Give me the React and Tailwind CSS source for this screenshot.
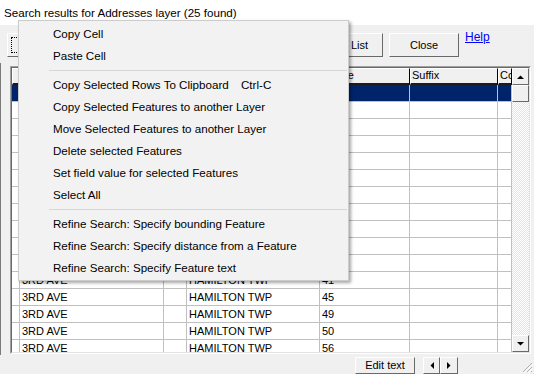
import React from "react";

const colW = ["w-[8px]", "w-[144px]", "w-[23px]", "w-[133px]", "w-[90px]", "w-[88px]", "w-[14px]"];
const headers = ["", "Street", "", "Municipality", "House", "Suffix", "Co"];
const nums = ["1", "5", "7", "9", "13", "17", "21", "25", "29", "33", "37", "41", "45", "49", "50", "56"];

function Tri({ dir }) {
  const pts = {
    up: "0,4 7,4 3.5,0.5",
    down: "0,0 7,0 3.5,3.5",
    left: "4,0 4,7 0.5,3.5",
    right: "0,0 0,7 3.5,3.5",
  }[dir];
  const vertical = dir === "up" || dir === "down";
  return (
    <svg width={vertical ? 7 : 4} height={vertical ? 4 : 7} viewBox={vertical ? "0 0 7 4" : "0 0 4 7"}>
      <polygon points={pts} fill="#000" />
    </svg>
  );
}

function SbBtn({ children }) {
  return (
    <div className="h-[17px] shrink-0 bg-[#f0f0f0] border border-t-white border-l-white border-r-[#696969] border-b-[#696969] flex items-center justify-center">
      {children}
    </div>
  );
}

function MenuItem({ children, shortcut }) {
  return (
    <div className="h-[22px] flex items-center pl-[34px] whitespace-nowrap text-black">
      {shortcut ? (
        <>
          <span className="inline-block w-[188px]">{children}</span>
          <span>{shortcut}</span>
        </>
      ) : (
        children
      )}
    </div>
  );
}

function Sep() {
  return (
    <div className="h-[7px] flex items-center pl-[30px] pr-[1px]">
      <div className="h-px flex-1 bg-[#d7d7d7]" />
    </div>
  );
}

export default function App() {
  return (
    <div className="w-[534px] h-[374px] relative overflow-hidden bg-[#f0f0f0] font-['Liberation_Sans',Arial,sans-serif] text-black">
      {/* title */}
      <div className="h-[25px] bg-white flex items-center pl-[4px] text-[11.6px] whitespace-nowrap">
        Search results for Addresses layer (25 found)
      </div>

      {/* toolbar */}
      <div className="h-[41px] flex items-start pt-[8px] text-[11px]">
        <div className="ml-[7px] w-[88px] h-[24px] bg-[#f0f0f0] border border-t-white border-l-white border-r-[#696969] border-b-[#696969] p-[3px]">
          <div className="w-full h-full border border-dotted border-black flex items-center justify-center">Zoom To</div>
        </div>
        <div className="ml-[202px] w-[86px] h-[24px] bg-[#f0f0f0] border border-t-white border-l-white border-r-[#696969] border-b-[#696969] flex items-center justify-end pr-[14px]">
          Print List
        </div>
        <div className="ml-[6px] w-[70px] h-[24px] bg-[#f0f0f0] border border-t-white border-l-white border-r-[#696969] border-b-[#696969] flex items-center justify-center">
          Close
        </div>
        <div className="ml-[6px] mt-[-3px] text-[12px] text-[#0000ff] underline leading-[14px]">Help</div>
      </div>

      {/* grid row */}
      <div className="flex h-[288px]">
        <div className="w-px bg-[#7a7a7a] mt-[-3px] h-[292px]" />
        <div className="ml-[9px] w-[521px] h-[288px] border border-t-[#a0a0a0] border-l-[#a0a0a0] border-r-white border-b-white">
          <div className="h-full border border-t-[#696969] border-l-[#696969] border-r-[#e3e3e3] border-b-[#e3e3e3] flex bg-white">
            <div className="w-[500px] flex flex-col overflow-hidden text-[11px]">
              <div className="h-[17px] shrink-0 flex">
                {headers.map((h, i) => (
                  <div
                    key={i}
                    className={`${colW[i]} h-full shrink-0 bg-[#f0f0f0] border-t border-l border-t-white border-l-white border-r border-r-black border-b-2 border-b-[#1c1c1c] pl-[1px] leading-[13px] overflow-hidden whitespace-nowrap`}
                  >
                    {h}
                  </div>
                ))}
              </div>
              {nums.map((n, r) => {
                const vals = ["", "3RD AVE", "", "HAMILTON TWP", n, "", ""];
                const sel = r === 0;
                return (
                  <div key={r} className={`h-[17px] shrink-0 flex ${sel ? "bg-[#00246a] text-white" : "bg-white"}`}>
                    {vals.map((v, i) => (
                      <div
                        key={i}
                        className={`${colW[i]} h-full shrink-0 border-r border-b border-[#c0c0c0] pl-[2px] leading-[16px] overflow-hidden whitespace-nowrap`}
                      >
                        {v}
                      </div>
                    ))}
                  </div>
                );
              })}
            </div>
            <div className="w-[17px] flex flex-col">
              <SbBtn>
                <Tri dir="up" />
              </SbBtn>
              <SbBtn />
              <div className="flex-1 bg-[image:repeating-conic-gradient(#e4e4e4_0%_25%,#ffffff_0%_50%)] bg-[length:2px_2px]" />
              <SbBtn>
                <Tri dir="down" />
              </SbBtn>
            </div>
          </div>
        </div>
      </div>

      {/* bottom bar */}
      <div className="h-[20px] flex items-start pt-[3px] text-[11px]">
        <div className="ml-[355px] w-[60px] h-[17px] bg-[#f0f0f0] border border-t-white border-l-white border-r-[#696969] border-b-[#696969] flex items-center justify-center leading-none">
          Edit text
        </div>
        <div className="ml-[8px] w-[17px] h-[17px] bg-[#f0f0f0] border border-t-white border-l-white border-r-[#696969] border-b-[#696969] flex items-center justify-center">
          <Tri dir="left" />
        </div>
        <div className="w-[18px] h-[17px] bg-[#f0f0f0] border border-t-white border-l-white border-r-[#696969] border-b-[#696969] flex items-center justify-center">
          <Tri dir="right" />
        </div>
        <div className="ml-auto self-end mr-[1px] mb-[1px]">
          <svg width="12" height="12" viewBox="0 0 12 12">
            <g stroke="#b0b0b0" strokeWidth="1">
              <line x1="11" y1="2" x2="2" y2="11" />
              <line x1="11" y1="6" x2="6" y2="11" />
              <line x1="11" y1="10" x2="10" y2="11" />
            </g>
            <g stroke="#ffffff" strokeWidth="1">
              <line x1="12" y1="3" x2="3" y2="12" />
              <line x1="12" y1="7" x2="7" y2="12" />
            </g>
          </svg>
        </div>
      </div>

      {/* context menu */}
      <div className="absolute left-[18px] top-[20px] w-[331px] h-[261px] bg-[#f2f2f2] border border-[#cccccc] shadow-[2px_2px_3px_rgba(0,0,0,0.35)] pt-[2px] text-[11.6px]">
        <MenuItem>Copy Cell</MenuItem>
        <MenuItem>Paste Cell</MenuItem>
        <Sep />
        <MenuItem shortcut="Ctrl-C">Copy Selected Rows To Clipboard</MenuItem>
        <MenuItem>Copy Selected Features to another Layer</MenuItem>
        <MenuItem>Move Selected Features to another Layer</MenuItem>
        <MenuItem>Delete selected Features</MenuItem>
        <MenuItem>Set field value for selected Features</MenuItem>
        <MenuItem>Select All</MenuItem>
        <Sep />
        <MenuItem>Refine Search: Specify bounding Feature</MenuItem>
        <MenuItem>Refine Search: Specify distance from a Feature</MenuItem>
        <MenuItem>Refine Search: Specify Feature text</MenuItem>
      </div>
    </div>
  );
}
